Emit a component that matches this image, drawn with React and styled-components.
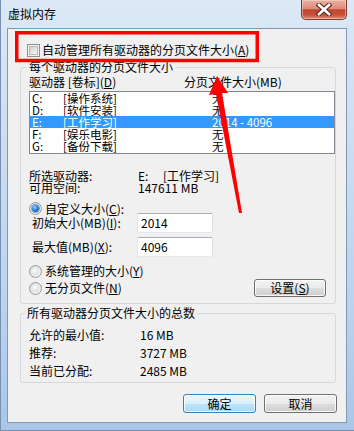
import React from 'react';
import styled, { createGlobalStyle } from 'styled-components';

const FONT = `"Noto Sans CJK SC", "Noto Sans", sans-serif`;

const Global = createGlobalStyle`
  html, body { margin: 0; padding: 0; background: #ffffff; }
  body { font-family: ${FONT}; font-size: 12px; color: #000; }
`;

const Window = styled.div`
  position: relative;
  width: 354px;
  height: 431px;
  box-sizing: border-box;
  display: flex;
  flex-direction: column;
  background: linear-gradient(180deg, #dce8f5 0%, #cfe0f2 25%, #bcd3ed 70%, #a9c6e8 100%);
  box-shadow: inset 1px 0 0 #7891b3, inset 0 -1px 0 #7891b3;
  overflow: hidden;
`;

const TitleBar = styled.div`
  height: 28px;
  flex: none;
  display: flex;
  align-items: flex-start;
  justify-content: space-between;
`;

const Title = styled.div`
  padding: 6px 0 0 8px;
  font-size: 12px;
  line-height: 16px;
  color: #000;
`;

const CloseButton = styled.div`
  width: 46px;
  height: 20px;
  margin-right: 7px;
  box-sizing: border-box;
  border: 1px solid #7a3a30;
  border-top: none;
  border-radius: 0 0 5px 5px;
  background: linear-gradient(180deg, #eab0a2 0%, #dc8b78 45%, #c4442e 52%, #c9503a 78%, #de8d73 100%);
  box-shadow: inset 0 0 0 1px rgba(255, 220, 210, 0.5);
  display: flex;
  align-items: center;
  justify-content: center;
`;

const Client = styled.div`
  flex: 1;
  margin: 0 7px 8px;
  box-sizing: border-box;
  border: 1px solid #8397b3;
  background: #f0f0f0;
  padding: 13px 10px 0 12px;
  display: flex;
  flex-direction: column;
`;

const CheckRow = styled.div`
  display: flex;
  align-items: center;
  height: 16px;
  margin-left: 7px;
  gap: 2px;
  line-height: 16px;
  white-space: nowrap;
`;

const CheckBox = styled.span`
  width: 13px;
  height: 13px;
  box-sizing: border-box;
  border: 1px solid #8e8f8f;
  background: #f4f4f4;
  display: flex;
  align-items: center;
  justify-content: center;
  &::after {
    content: '';
    width: 9px;
    height: 9px;
    box-sizing: border-box;
    border: 1px solid #b9b9b9;
    background: linear-gradient(135deg, #cfcfcf 0%, #e6e6e6 60%, #f6f6f6 100%);
  }
`;

const Mn = styled.span`
  text-decoration: underline;
  text-underline-offset: 1px;
`;

const Group = styled.fieldset`
  margin: ${(p) => p.$mt}px 0 0;
  padding: 0 0 ${(p) => p.$pb}px 8px;
  border: 1px solid #d3d9de;
  border-radius: 3px;
  min-width: 0;
  display: flex;
  flex-direction: column;
`;

const Legend = styled.legend`
  padding: 0 2px;
  margin-left: ${(p) => p.$ml}px;
  font-size: 12px;
  line-height: 14px;
  white-space: nowrap;
`;

const HeaderRow = styled.div`
  display: grid;
  grid-template-columns: 155px 1fr;
  margin-top: 1px;
  line-height: 14px;
  white-space: nowrap;
`;

const ListBox = styled.div`
  margin-top: 2px;
  height: 63px;
  box-sizing: border-box;
  border: 1px solid #828790;
  background: #ffffff;
  display: flex;
  flex-direction: column;
`;

const ListRow = styled.div`
  display: grid;
  grid-template-columns: 31px 149px 1fr;
  height: 12px;
  line-height: 12px;
  font-size: 11.5px;
  padding-left: 2px;
  white-space: nowrap;
  background: ${(p) => (p.$selected ? '#3399ff' : 'transparent')};
  color: ${(p) => (p.$selected ? '#ffffff' : '#000000')};
`;

const InfoList = styled.div`
  margin-top: ${(p) => p.$mt}px;
  display: flex;
  flex-direction: column;
`;

const InfoRow = styled.div`
  display: grid;
  grid-template-columns: ${(p) => p.$col}px 1fr;
  height: ${(p) => p.$h}px;
  line-height: ${(p) => p.$h}px;
  white-space: nowrap;
`;

const DriveValue = styled.span`
  display: grid;
  grid-template-columns: 25px auto;
`;

const RadioRow = styled.div`
  display: flex;
  align-items: center;
  gap: 3px;
  height: ${(p) => p.$h}px;
  margin-top: ${(p) => p.$mt}px;
  white-space: nowrap;
  line-height: 14px;
`;

const Radio = styled.span`
  width: 13px;
  height: 13px;
  flex: none;
  box-sizing: border-box;
  border-radius: 50%;
  border: 1px solid #9a9a9a;
  background: radial-gradient(circle at 60% 60%, #ffffff 0%, #e8e8e8 55%, #cfcfcf 100%);
  display: flex;
  align-items: center;
  justify-content: center;
  &::after {
    content: '';
    width: 7px;
    height: 7px;
    border-radius: 50%;
    background: ${(p) =>
      p.$checked
        ? 'radial-gradient(circle at 40% 35%, #9fd1ff 0%, #2f7fd6 45%, #0f4d96 100%)'
        : 'radial-gradient(circle at 40% 35%, #ffffff 0%, #e3e3e3 60%, #c8c8c8 100%)'};
    box-shadow: ${(p) => (p.$checked ? '0 0 0 1px #6fa7dd' : 'none')};
  }
`;

const FieldRow = styled.div`
  display: grid;
  grid-template-columns: 108px 76px;
  align-items: center;
  height: 20px;
  margin-top: ${(p) => p.$mt}px;
  white-space: nowrap;
`;

const FieldLabel = styled.span`
  padding-left: 3px;
  line-height: 14px;
`;

const TextInput = styled.input`
  width: 76px;
  height: 20px;
  box-sizing: border-box;
  margin: 0;
  padding: 0 0 2px 3px;
  border: 1px solid;
  border-color: #abadb3 #dbdfe6 #e3e9ef #e2e3ea;
  border-radius: 2px;
  background: #ffffff;
  font-family: ${FONT};
  font-size: 12px;
  color: #000;
  outline: none;
`;

const SplitRow = styled.div`
  display: flex;
  align-items: center;
  justify-content: space-between;
  height: 18px;
  margin-top: ${(p) => p.$mt}px;
`;

const WinButton = styled.button`
  width: ${(p) => p.$w}px;
  height: ${(p) => p.$h}px;
  margin: 0 ${(p) => p.$mr || 0}px 0 0;
  padding: 0;
  box-sizing: border-box;
  border: 1px solid ${(p) => (p.$default ? '#3c7fb1' : '#707070')};
  border-radius: 3px;
  background: ${(p) =>
    p.$default
      ? 'linear-gradient(180deg, #eaf6fd 0%, #d9f0fc 50%, #bee6fd 51%, #a7d9f5 100%)'
      : 'linear-gradient(180deg, #f2f2f2 0%, #ebebeb 50%, #dddddd 51%, #cfcfcf 100%)'};
  box-shadow: inset 0 0 0 1px rgba(255, 255, 255, 0.8);
  font-family: ${FONT};
  font-size: 12px;
  line-height: 14px;
  color: #000;
`;

const ButtonBar = styled.div`
  display: flex;
  justify-content: flex-end;
  gap: 8px;
  margin: 11px -1px 0 0;
`;

const Annotation = styled.svg`
  position: absolute;
  left: 0;
  top: 0;
  pointer-events: none;
`;

const drives = [
  { l: 'C:', n: '[操作系统]', s: '无' },
  { l: 'D:', n: '[软件安装]', s: '无' },
  { l: 'E:', n: '[工作学习]', s: '2014 - 4096', sel: true },
  { l: 'F:', n: '[娱乐电影]', s: '无' },
  { l: 'G:', n: '[备份下载]', s: '无' },
];

export default function App() {
  return (
    <>
      <Global />
      <Window>
        <TitleBar>
          <Title>虚拟内存</Title>
          <CloseButton>
            <svg width="16" height="13" viewBox="0 0 16 13">
              <path
                d="M3 2 L13 11 M13 2 L3 11"
                stroke="#4a1d17"
                strokeWidth="4.6"
                strokeLinecap="square"
              />
              <path
                d="M3 2 L13 11 M13 2 L3 11"
                stroke="#ffffff"
                strokeWidth="2.8"
                strokeLinecap="square"
              />
            </svg>
          </CloseButton>
        </TitleBar>
        <Client>
          <CheckRow>
            <CheckBox />
            <span>
              自动管理所有驱动器的分页文件大小(<Mn>A</Mn>)
            </span>
          </CheckRow>

          <Group $mt={2} $pb={6}>
            <Legend $ml={-2}>每个驱动器的分页文件大小</Legend>
            <HeaderRow>
              <span>
                驱动器 [卷标](<Mn>D</Mn>)
              </span>
              <span>分页文件大小(MB)</span>
            </HeaderRow>
            <ListBox>
              {drives.map((d) => (
                <ListRow key={d.l} $selected={d.sel}>
                  <span>{d.l}</span>
                  <span>{d.n}</span>
                  <span>{d.s}</span>
                </ListRow>
              ))}
            </ListBox>

            <InfoList $mt={16}>
              <InfoRow $col={109} $h={12}>
                <span>所选驱动器:</span>
                <DriveValue>
                  <span>E:</span>
                  <span>[工作学习]</span>
                </DriveValue>
              </InfoRow>
              <InfoRow $col={109} $h={12}>
                <span>可用空间:</span>
                <span>147611 MB</span>
              </InfoRow>
            </InfoList>

            <RadioRow $h={9} $mt={10}>
              <Radio $checked />
              <span>
                自定义大小(<Mn>C</Mn>):
              </span>
            </RadioRow>
            <FieldRow $mt={0}>
              <FieldLabel>
                初始大小(MB)(<Mn>I</Mn>):
              </FieldLabel>
              <TextInput readOnly defaultValue="2014" />
            </FieldRow>
            <FieldRow $mt={4}>
              <FieldLabel>
                最大值(MB)(<Mn>X</Mn>):
              </FieldLabel>
              <TextInput readOnly defaultValue="4096" />
            </FieldRow>
            <RadioRow $h={12} $mt={8}>
              <Radio />
              <span>
                系统管理的大小(<Mn>Y</Mn>)
              </span>
            </RadioRow>
            <SplitRow $mt={2}>
              <RadioRow $h={12} $mt={0}>
                <Radio />
                <span>
                  无分页文件(<Mn>N</Mn>)
                </span>
              </RadioRow>
              <WinButton $w={72} $h={18} $mr={9}>
                设置(<Mn>S</Mn>)
              </WinButton>
            </SplitRow>
          </Group>

          <Group $mt={2} $pb={2}>
            <Legend $ml={-4}>所有驱动器分页文件大小的总数</Legend>
            <InfoList $mt={6}>
              <InfoRow $col={111} $h={18}>
                <span>允许的最小值:</span>
                <span>16 MB</span>
              </InfoRow>
              <InfoRow $col={111} $h={18}>
                <span>推荐:</span>
                <span>3727 MB</span>
              </InfoRow>
              <InfoRow $col={111} $h={18}>
                <span>当前已分配:</span>
                <span>2485 MB</span>
              </InfoRow>
            </InfoList>
          </Group>

          <ButtonBar>
            <WinButton $w={73} $h={19} $default>
              确定
            </WinButton>
            <WinButton $w={73} $h={19}>
              取消
            </WinButton>
          </ButtonBar>
        </Client>

        <Annotation width="354" height="431" viewBox="0 0 354 431">
          <rect x="16.75" y="32.75" width="240.5" height="27.75" fill="none" stroke="#ff0000" strokeWidth="3.5" />
          <polygon points="217,76 228,93 222,93 242,213 239,213 216,94 209,95" fill="#ff0000" />
        </Annotation>
      </Window>
    </>
  );
}
